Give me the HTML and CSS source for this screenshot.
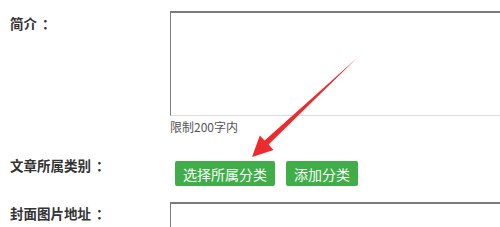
FILE: index.html
```html
<!DOCTYPE html>
<html lang="zh-CN">

<head>
    <meta charset="UTF-8">
    <meta name="viewport" content="width=device-width, initial-scale=1.0">
    <title>文章编辑</title>

    <link rel="stylesheet" href="styles.css">
</head>

<body>
    <form class="form">
        <div class="row">
            <label class="label">简介<span class="colon">：</span></label>
            <div class="field">
                <textarea class="intro"></textarea>
                <p class="hint">限制200字内</p>
            </div>
        </div>

        <div class="row row-cat">
            <label class="label">文章所属类别<span class="colon">：</span></label>
            <div class="field btns">
                <button type="button" class="btn">选择所属分类</button>
                <button type="button" class="btn">添加分类</button>
            </div>
        </div>

        <div class="row row-cover">
            <label class="label">封面图片地址<span class="colon">：</span></label>
            <div class="field">
                <input type="text" class="cover">
            </div>
        </div>
    </form>

    <!-- red arrow pointing at the select button -->
    <svg class="arrow" width="500" height="227" viewBox="0 0 500 227">
        <polygon points="357,58 268.6,144.6 273.5,150 252,157 259.8,135.4 264.6,140.6" fill="#ec2b2f" />
    </svg>
</body>

</html>
```

FILE: styles.css
```css
* {
    margin: 0px;
    padding: 0px;
    box-sizing: border-box;
}

body {
    background-color: white;
    font-family: "Noto Sans CJK SC", "Liberation Sans", sans-serif;
    color: #333;
    overflow: hidden;
}

.form {
    padding-left: 10px;
    padding-top: 11px;
}

.row {
    display: flex;
}

.label {
    width: 160px;
    flex-shrink: 0;
    font-size: 13.5px;
    font-weight: bold;
    line-height: 20px;
    padding-top: 2px;
}

.colon {
    padding-left: 5px;
}

.field {
    flex: 1;
}

.intro {
    display: block;
    width: 330px;
    height: 105px;
    border: 1px solid;
    border-color: #7a7a7a #cfcfcf #dcdcdc #7a7a7a;
    border-top-width: 2px;
    border-right: none;
    resize: none;
}

.hint {
    margin-top: 4px;
    font-size: 12px;
    line-height: 14px;
    color: #555;
}

.row-cat {
    margin-top: 19px;
}

.btns {
    display: flex;
    gap: 11px;
    padding-top: 8px;
    padding-left: 5px;
}

.btn {
    height: 25px;
    padding: 0 8px;
    border: none;
    border-radius: 2px;
    background-color: #3fae49;
    color: white;
    font-family: "Noto Sans CJK SC", sans-serif;
    font-size: 14px;
}

.row-cover {
    margin-top: 16px;
}

.row-cover .label {
    padding-top: 1px;
}

.cover {
    display: block;
    width: 330px;
    height: 28px;
    border: 1px solid;
    border-color: #7a7a7a #cfcfcf #dcdcdc #7a7a7a;
    border-top-width: 2px;
    border-right: none;
}

.arrow {
    position: absolute;
    left: 0;
    top: 0;
}
```
